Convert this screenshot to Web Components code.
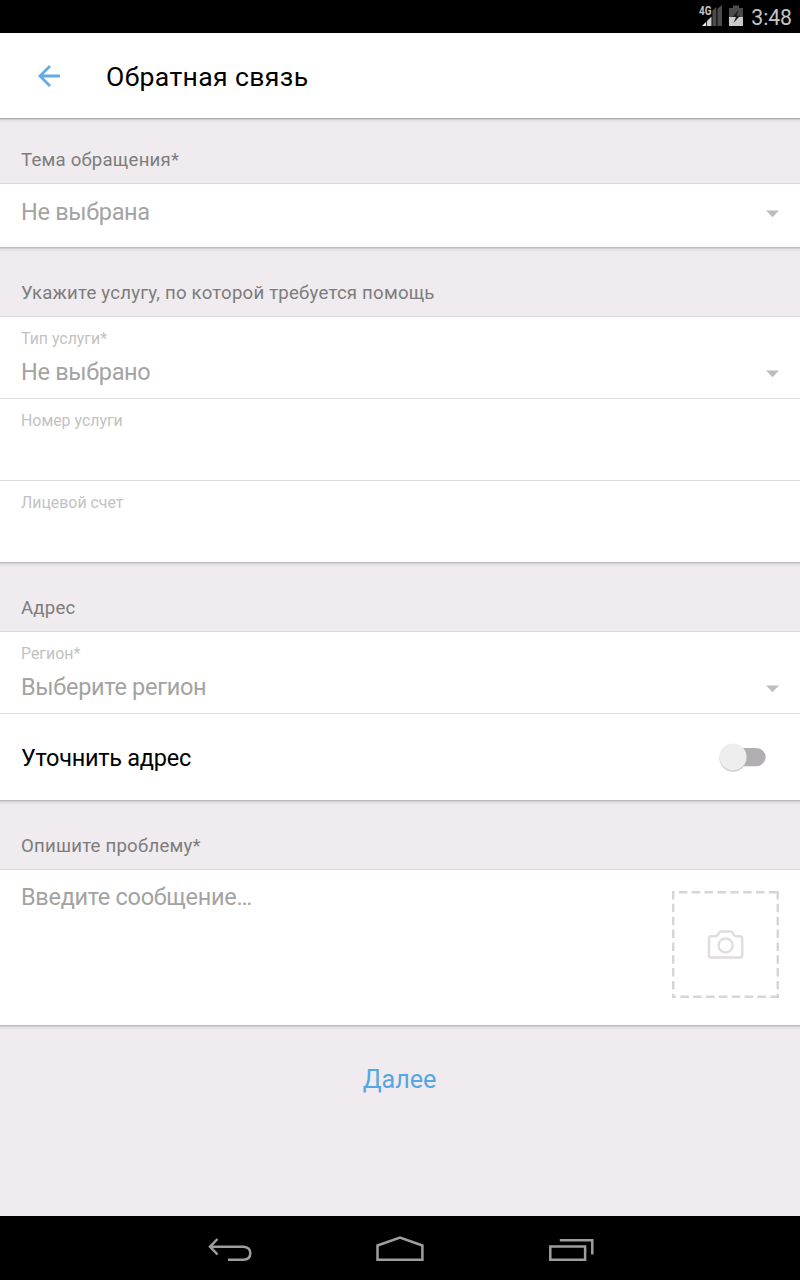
<!DOCTYPE html>
<html lang="ru">
<head>
<meta charset="utf-8">
<title>Обратная связь</title>
<style>
html,body{margin:0;background:#efebee}
body{width:800px;height:1280px;overflow:hidden;font-family:Roboto,"Noto Sans",sans-serif}
</style>
</head>
<body>
<feedback-app></feedback-app>
<script>
const define = (name, html) => customElements.define(name, class extends HTMLElement {
  constructor() {
    super();
    const t = document.createElement('template');
    t.innerHTML = html;
    this.attachShadow({mode: 'open'}).append(t.content.cloneNode(true));
  }
});

define('status-bar', `
<style>
:host{display:flex;height:33px;background:#000;color:#c4c4c4;justify-content:flex-end;align-items:flex-start;padding-right:8px;box-sizing:border-box}
svg{display:block;flex:none;margin-right:7px}
.time{font-size:21.3px;line-height:25px;margin-top:5px;letter-spacing:-.1px}
</style>
<svg width="46" height="33" viewBox="698 0 46 33">
  <path d="M702 26L706.2 21.8V26Z" fill="#eee"/><path d="M707 26V21L711.5 16.5V26Z" fill="#cfcfcf"/>
  <path d="M712.4 26V10.6L716.4 7V26ZM717.4 26V8.8L722 5V26Z" fill="#4b4b4b"/>
  <text x="699" y="15.3" font-family="Roboto" font-size="12.5" font-weight="700" fill="#c4c4c4" textLength="12.5" lengthAdjust="spacingAndGlyphs">4G</text>
  <path d="M729 8H733V5.5H739V8H743V17H729Z" fill="#4b4b4b"/>
  <path d="M729 17H743V26H729Z" fill="#cacaca"/>
  <path d="M738.7 9.7L732.5 17H736L733.5 23L740 15.7H736.5Z" fill="#1b1b1b"/>
</svg>
<span class="time">3:48</span>`);

define('app-header', `
<style>
:host{display:flex;position:relative;z-index:2;align-items:center;height:85px;background:#fff;box-shadow:0 1px 0 #aeadae,0 2px 0 #cfcccf,0 4px 1px #e6e3e6}
svg{display:block;margin:0 0 0 36px;flex:none}
h1{margin:3px 0 0 44px;font-size:26.6px;line-height:34px;font-weight:400;color:#000;letter-spacing:.36px}
</style>
<svg width="26" height="26" viewBox="36 63 26 26"><path d="M60 76H40.5M50 66L40 76L50 86" fill="none" stroke="#64abe6" stroke-width="2.8"/></svg>
<h1><slot></slot></h1>`);

define('form-section', `
<style>
:host{display:block}
h2{margin:0;height:var(--head,70px);box-sizing:border-box;border-bottom:1px solid #dcdbdc;padding:0 21px 11px;display:flex;align-items:flex-end;font-size:18.6px;line-height:24px;font-weight:400;color:#7d7d7d;letter-spacing:.22px}
.card{position:relative;background:#fff;box-shadow:0 1px 0 #bebcbe,0 2px 0 #d2cfd2,0 4px 1px #e6e2e5}
</style>
<h2><slot name="title"></slot></h2><div class="card"><slot></slot></div>`);

define('drop-arrow', `
<style>:host{display:block;flex:none}svg{display:block}</style>
<svg width="14" height="8" viewBox="0 0 14 8"><path d="M0 .6H13L6.5 7.3Z" fill="#bdbdbd"/></svg>`);

define('form-field', `
<style>
:host{display:block;height:82px;box-sizing:border-box;border-bottom:1px solid #dcdcdc;padding:12px 20px 0 21px}
:host([last]){height:81px;border-bottom:0}
:host([plain]){height:63px;border-bottom:0;padding-top:14px}
:host([plain]) .label{display:none}
.label{font-size:15.9px;line-height:20px;color:#c2c2c2}
.row{display:flex;justify-content:space-between;align-items:center;height:28px;margin-top:9px;font-size:23.5px;letter-spacing:-.3px;line-height:28px;color:#a3a3a3}
:host([plain]) .row{margin-top:0}
drop-arrow{margin-top:4px}
:host([empty]) .row{display:none}
</style>
<div class="label"><slot name="label"></slot></div>
<div class="row"><span><slot></slot></span><drop-arrow></drop-arrow></div>`);

define('switch-row', `
<style>
:host{display:flex;align-items:center;justify-content:space-between;height:86px;box-sizing:border-box;padding:1px 30px 0 21px;font-size:23.5px;line-height:28px;letter-spacing:-.27px;color:#000}
svg{display:block;margin-bottom:1px}
</style>
<span><slot></slot></span>
<svg width="52" height="36" viewBox="718 739 52 36">
 <rect x="724" y="748" width="41.7" height="18.2" rx="9.1" fill="#b2afb2"/>
 <circle cx="733" cy="758.2" r="13.6" fill="#d0ced0"/>
 <circle cx="733" cy="756.8" r="13.4" fill="#eee"/>
</svg>`);

define('photo-picker', `
<style>:host{display:block;flex:none}svg{display:block}</style>
<svg width="107" height="107" viewBox="672 891 107 107" fill="none">
 <g stroke="#d8d5d8" stroke-width="2.5">
 <path d="M672 892.2H779" stroke-dasharray="8.5 4.35" stroke-dashoffset="6"/>
 <path d="M777.8 891V998" stroke-dasharray="8.5 4.35"/>
 <path d="M673.2 891V998" stroke-dasharray="8.5 4.35"/>
 <path d="M672 996.8H779" stroke-dasharray="8.5 4.35" stroke-dashoffset="4.5"/>
 </g>
 <g stroke="#e0dcdf" stroke-width="2.5">
 <path d="M711 936.2H715.5Q717 936.2 718 934.5L719 932.8Q719.6 931.5 721 931.5H730.5Q732 931.5 732.6 932.8L733.6 934.5Q734.5 936.2 736 936.2H740Q742.2 936.2 742.2 938.4V955.3Q742.2 957.6 740 957.6H711.3Q709 957.6 709 955.3V938.4Q709 936.2 711 936.2Z"/>
 <circle cx="725.6" cy="945.4" r="7"/></g>
</svg>`);

define('message-field', `
<style>
:host{display:flex;justify-content:space-between;align-items:flex-start;height:155px;box-sizing:border-box;padding:21px 21px 0}
span{font-size:23.5px;letter-spacing:-.3px;line-height:28px;color:#a3a3a3;margin-top:-8px}
</style>
<span><slot></slot></span><photo-picker></photo-picker>`);

define('next-button', `
<style>
:host{display:flex;justify-content:center;padding:39px 1px 0 0}
button{all:unset;font-size:25.2px;letter-spacing:-.1px;line-height:32px;color:#56a6e4}
</style>
<button><slot></slot></button>`);

define('nav-bar', `
<style>
:host{display:flex;justify-content:center;align-items:center;height:64px;background:#000}
svg{display:block}
</style>
<svg width="400" height="64" viewBox="200 1216 400 64" fill="none" stroke="#9e9e9e" stroke-width="2.5">
 <path d="M217.5 1239L210 1246.7L217.5 1254.5M210 1246.7H243.5Q250.3 1247.2 250.3 1253.3Q250.3 1259.6 243.5 1259.8H228"/>
 <path d="M377.5 1259.8V1245.5L400 1237.6L422.4 1245.5V1259.8Z"/>
 <path d="M550.3 1246.6H585.1V1259.8H550.3ZM559.8 1240.2H592.3V1254.4"/>
</svg>`);

define('feedback-app', `
<style>
:host{display:flex;flex-direction:column;width:800px;height:1280px;background:#efebee}
main{flex:1}
.first{--head:66px}
</style>
<status-bar></status-bar>
<app-header>Обратная связь</app-header>
<main>
 <form-section class="first"><span slot="title">Тема обращения*</span><form-field plain>Не выбрана</form-field></form-section>
 <form-section><span slot="title">Укажите услугу, по которой требуется помощь</span>
  <form-field><span slot="label">Тип услуги*</span>Не выбрано</form-field>
  <form-field empty><span slot="label">Номер услуги</span></form-field>
  <form-field empty last><span slot="label">Лицевой счет</span></form-field>
 </form-section>
 <form-section><span slot="title">Адрес</span>
  <form-field><span slot="label">Регион*</span>Выберите регион</form-field>
  <switch-row>Уточнить адрес</switch-row>
 </form-section>
 <form-section><span slot="title">Опишите проблему*</span><message-field>Введите сообщение…</message-field></form-section>
 <next-button>Далее</next-button>
</main>
<nav-bar></nav-bar>`);
</script>
</body>
</html>
